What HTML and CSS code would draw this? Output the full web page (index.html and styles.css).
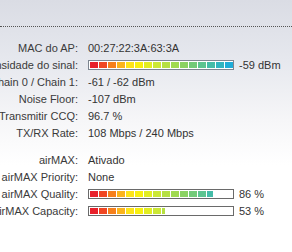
FILE: index.html
```html
<!DOCTYPE html>
<html>
<head>
<meta charset="utf-8">
<link rel="stylesheet" href="styles.css">
</head>
<body>
<div class="page">
  <div class="top"></div>
  <div class="info">
    <div class="row"><div class="label">MAC do AP:</div><div class="value">00:27:22:3A:63:3A</div></div>
    <div class="row"><div class="label">Intensidade do sinal:</div><div class="value">
      <div class="bar bar-signal"><div class="fill" style="width:100%"><span class="s1"></span><span class="s2"></span><span class="s3"></span><span class="s4"></span><span class="s5"></span><span class="s6"></span><span class="s7"></span><span class="s8"></span><span class="s9"></span><span class="s10"></span><span class="s11"></span><span class="s12"></span><span class="s13"></span><span class="s14"></span><span class="s15"></span><span class="s16"></span></div></div>
      <span class="after">-59 dBm</span></div></div>
    <div class="row"><div class="label">Chain 0 / Chain 1:</div><div class="value">-61 / -62 dBm</div></div>
    <div class="row"><div class="label">Noise Floor:</div><div class="value">-107 dBm</div></div>
    <div class="row"><div class="label">Transmitir CCQ:</div><div class="value">96.7 %</div></div>
    <div class="row"><div class="label">TX/RX Rate:</div><div class="value">108 Mbps / 240 Mbps</div></div>
    <div class="row gap"><div class="label">airMAX:</div><div class="value">Ativado</div></div>
    <div class="row"><div class="label">airMAX Priority:</div><div class="value">None</div></div>
    <div class="row"><div class="label">airMAX Quality:</div><div class="value">
      <div class="bar"><div class="fill" style="width:86%"><span class="s1"></span><span class="s2"></span><span class="s3"></span><span class="s4"></span><span class="s5"></span><span class="s6"></span><span class="s7"></span><span class="s8"></span><span class="s9"></span><span class="s10"></span><span class="s11"></span><span class="s12"></span><span class="s13"></span><span class="s14"></span><span class="s15"></span><span class="s16"></span></div></div>
      <span class="after">86 %</span></div></div>
    <div class="row"><div class="label">airMAX Capacity:</div><div class="value">
      <div class="bar"><div class="fill" style="width:53%"><span class="s1"></span><span class="s2"></span><span class="s3"></span><span class="s4"></span><span class="s5"></span><span class="s6"></span><span class="s7"></span><span class="s8"></span><span class="s9"></span><span class="s10"></span><span class="s11"></span><span class="s12"></span><span class="s13"></span><span class="s14"></span><span class="s15"></span><span class="s16"></span></div></div>
      <span class="after">53 %</span></div></div>
  </div>
</div>
</body>
</html>
```
FILE: styles.css
```css
html, body {
  margin: 0;
  padding: 0;
}
body {
  width: 292px;
  height: 252px;
  overflow: hidden;
  background: linear-gradient(to bottom, #dadce4 0px, #e6e8ee 60px, #f6f6f8 120px, #ffffff 165px, #ffffff 252px);
  font-family: "Liberation Sans", Arial, sans-serif;
  font-size: 11px;
  color: #333;
}
.page {
  display: flex;
  flex-direction: column;
}
.top {
  height: 26px;
  border-bottom: 1px dotted #555;
}
.info {
  display: flex;
  flex-direction: column;
  padding-top: 12px;
}
.row {
  display: flex;
  align-items: center;
  height: 17px;
  gap: 10px;
}
.row.gap {
  margin-top: 10px;
}
.label {
  width: 78px;
  flex: none;
  display: flex;
  justify-content: flex-end;
  white-space: nowrap;
  color: #3a3a3a;
}
.value {
  display: flex;
  align-items: center;
  white-space: nowrap;
}
.bar {
  width: 144px;
  height: 8px;
  border: 1px solid #6a6a6a;
  background: #fff;
  flex: none;
}
.bar-signal {
  border-color: #7c8590;
}
.fill {
  height: 6px;
  margin-top: 1px;
  padding-left: 1px;
  box-sizing: border-box;
  display: flex;
  gap: 1px;
  overflow: hidden;
}
.fill span {
  width: 8px;
  height: 6px;
  flex: none;
}
.after {
  margin-left: 5px;
}
.s1 { background: #e8202a; }
.s2 { background: #f04622; }
.s3 { background: #f6801c; }
.s4 { background: #fbb41c; }
.s5 { background: #fde418; }
.s6 { background: #f8f010; }
.s7 { background: #e2ee22; }
.s8 { background: #cce836; }
.s9 { background: #b6e042; }
.s10 { background: #a0da50; }
.s11 { background: #8ad262; }
.s12 { background: #72ca78; }
.s13 { background: #5cc490; }
.s14 { background: #44bca8; }
.s15 { background: #30b4c0; }
.s16 { background: #1eacd8; }
```
